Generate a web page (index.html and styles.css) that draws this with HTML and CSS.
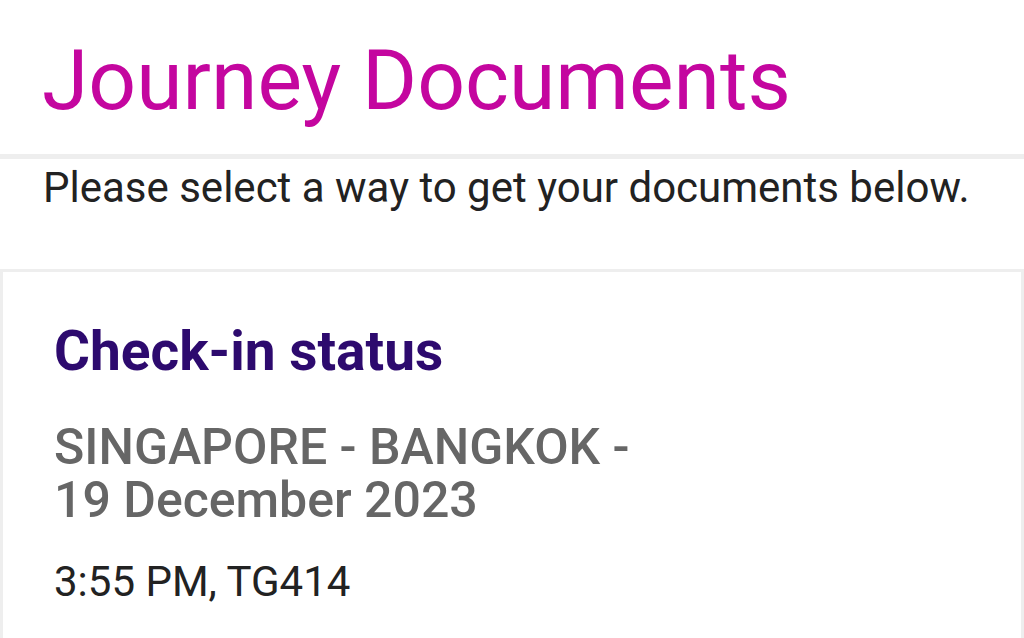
FILE: index.html
```html
<!DOCTYPE html>
<html>
<head>
<meta charset="utf-8">
<link rel="stylesheet" href="styles.css">
</head>
<body>
<header class="page-header">
  <h1 class="page-title">Journey Documents</h1>
</header>
<div class="divider"></div>
<p class="intro">Please select a way to get your documents below.</p>
<section class="card">
  <h2 class="card-title">Check-in status</h2>
  <div class="route">SINGAPORE - BANGKOK -<br>19 December 2023</div>
  <div class="flight">3:55 PM, TG414</div>
</section>
</body>
</html>
```
FILE: styles.css
```css
html, body {
  margin: 0;
  padding: 0;
  background: #ffffff;
  font-family: Roboto, "Liberation Sans", sans-serif;
  overflow: hidden;
}
.page-header {
  padding: 39px 0 0 42px;
}
.page-title {
  margin: 0;
  font-weight: 400;
  font-size: 84px;
  line-height: 84px;
  color: #c4069f;
}
.divider {
  height: 5px;
  background: #eeeeee;
  margin-top: 31px;
}
.intro {
  margin: 0;
  padding: 5px 0 0 43px;
  font-size: 42px;
  line-height: 48px;
  color: #222222;
}
.card {
  margin-top: 57px;
  border: 3px solid #eeeeee;
  border-bottom: none;
  padding: 49px 0 0 51px;
  height: 400px;
}
.card-title {
  margin: 0;
  font-size: 55px;
  font-weight: 700;
  line-height: 60px;
  color: #2d0a6e;
}
.route {
  margin-top: 40px;
  font-size: 50px;
  font-weight: 500;
  line-height: 53px;
  color: #666666;
}
.flight {
  margin-top: 31px;
  font-size: 42px;
  line-height: 48px;
  color: #222222;
}
```
